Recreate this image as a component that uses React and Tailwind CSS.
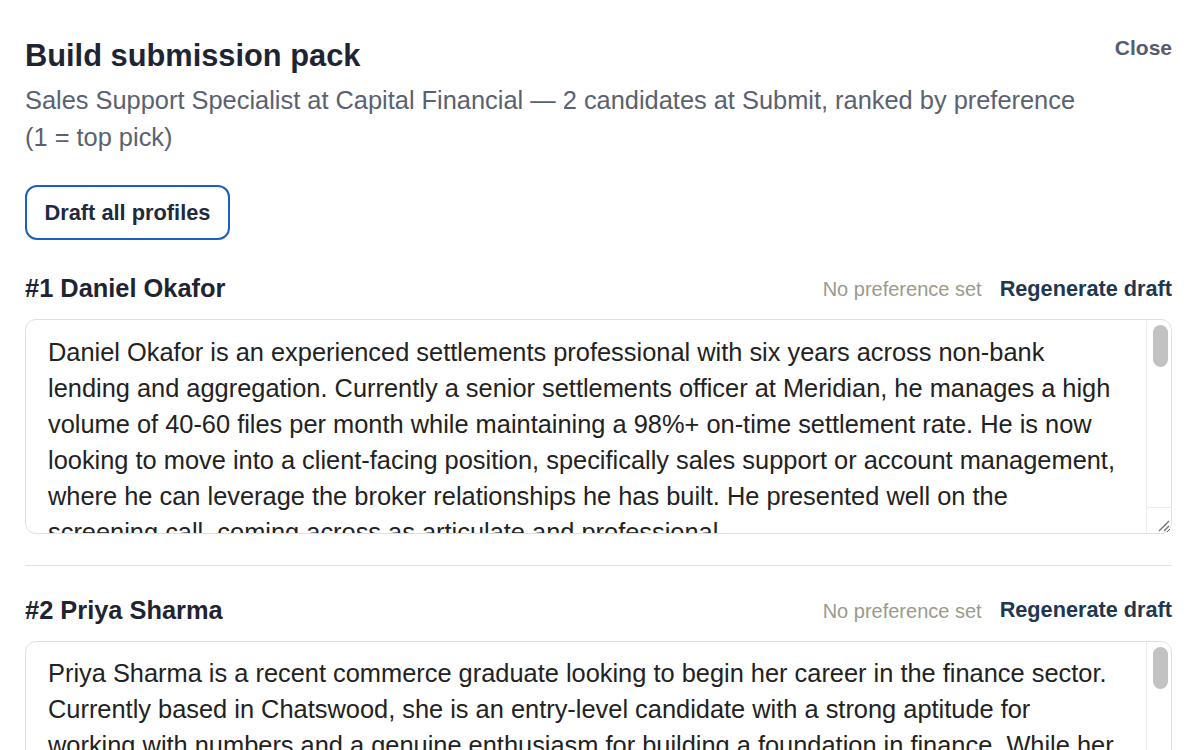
import { useState } from "react";

const candidates = [
  {
    rank: 1,
    name: "Daniel Okafor",
    draft:
      "Daniel Okafor is an experienced settlements professional with six years across non-bank lending and aggregation. Currently a senior settlements officer at Meridian, he manages a high volume of 40-60 files per month while maintaining a 98%+ on-time settlement rate. He is now looking to move into a client-facing position, specifically sales support or account management, where he can leverage the broker relationships he has built. He presented well on the screening call, coming across as articulate and professional.\n\nIn his current role Daniel works closely with brokers, lenders and solicitors to keep deals moving, and he is the first point of contact when a settlement runs into trouble. He is comfortable juggling competing deadlines and has a reputation internally for calm, clear communication under pressure.\n\nKey strengths for this role:\n- Deep working knowledge of the loan lifecycle from application through to settlement\n- Established relationships with a broad network of mortgage brokers\n- Strong attention to detail and a proven record of accuracy at volume\n- Confident on the phone and in writing\n\nDaniel is seeking a base salary in the range discussed and is available on four weeks' notice. He is based in the inner west and is happy to work from the Sydney CBD office.",
  },
  {
    rank: 2,
    name: "Priya Sharma",
    draft:
      "Priya Sharma is a recent commerce graduate looking to begin her career in the finance sector. Currently based in Chatswood, she is an entry-level candidate with a strong aptitude for working with numbers and a genuine enthusiasm for building a foundation in finance. While her professional experience is limited, she completed an internship in a busy accounts team during her final year and has held a part-time customer service role throughout her studies.\n\nPriya came across as bright, well prepared and eager to learn. She asked thoughtful questions about the team structure and the path from sales support into a client-facing role.\n\nKey strengths for this role:\n- Strong numeracy and comfort with spreadsheets\n- Customer service experience in a fast-paced environment\n- Motivated, coachable and keen to grow with the business\n\nPriya is available to start immediately.",
  },
];

// the screenshot browser hides native scrollbars, so the textarea's bar is drawn over it
function FakeScrollbar() {
  return (
    <div className="pointer-events-none absolute right-[1.5px] top-[1.5px] bottom-[1.5px] w-[25px] flex flex-col border-l border-[#ececec] bg-white rounded-r-[10px]">
      <div className="flex-1 pt-[4.5px] pl-[6px]">
        <div className="h-[42px] w-[15px] rounded-full bg-[#c2c2c2]" />
      </div>
      <div className="h-[26px] border-t border-[#ececec]">
        <svg width="24" height="25" viewBox="0 0 24 25" className="block">
          <line x1="12" y1="23" x2="22" y2="13" stroke="#6f6f6f" strokeWidth="1.3" />
          <line x1="17" y1="23" x2="22" y2="18" stroke="#6f6f6f" strokeWidth="1.3" />
        </svg>
      </div>
    </div>
  );
}

function CandidateSection({ c, first }) {
  const [text, setText] = useState(c.draft);
  return (
    <section className={first ? "pb-[31px]" : "border-t-[1.5px] border-[#e4e2dc] pt-[25.5px] pb-[31px]"}>
      <div className="flex items-center justify-between h-[32px] mt-[2px]">
        <h3 className="text-[25.4px] leading-[32px] font-bold text-[#1f2433]">
          #{c.rank} {c.name}
        </h3>
        <div className="flex items-center gap-[18px] pt-[2px]">
          <span className="text-[20px] text-[#9b9a8c]">No preference set</span>
          <button className="text-[21.7px] font-bold text-[#213750]">Regenerate draft</button>
        </div>
      </div>
      <div className="relative mt-[15px]">
        <textarea
          value={text}
          onChange={(e) => setText(e.target.value)}
          className="block w-full h-[215px] rounded-[11px] border-[1.5px] border-[#e3e0d8] pl-[22px] pr-[49px] pt-[13.5px] pb-[13px] text-[25.4px] leading-[36px] text-[#222222] outline-none resize-y"
        />
        <FakeScrollbar />
      </div>
    </section>
  );
}

export default function App() {
  return (
    <div
      className="h-[750px] overflow-hidden bg-white pl-[25px] pr-[28px] pt-[34px]"
      style={{ fontFamily: '"Liberation Sans", Arial, sans-serif' }}
    >
      <div className="flex items-start gap-[32px]">
        <div className="flex-1 pt-[4px]">
          <h2 className="text-[30.8px] leading-[36px] font-bold text-[#1e2433]">Build submission pack</h2>
          <p className="mt-[7.5px] text-[25.4px] leading-[37px] text-[#5a6170]">
            Sales Support Specialist at Capital Financial — 2 candidates at Submit, ranked by preference (1 = top pick)
          </p>
        </div>
        <button className="text-[21px] leading-[28px] font-bold text-[#565d69]">Close</button>
      </div>

      <button className="mt-[29.5px] rounded-[12px] border-[2.5px] border-[#1a5fc8] px-[17.5px] py-[11px] text-[21.8px] leading-[29px] font-bold text-[#1e2a3d]">
        Draft all profiles
      </button>

      <div className="mt-[32px]">
        {candidates.map((c, i) => (
          <CandidateSection key={c.rank} c={c} first={i === 0} />
        ))}
      </div>
    </div>
  );
}
